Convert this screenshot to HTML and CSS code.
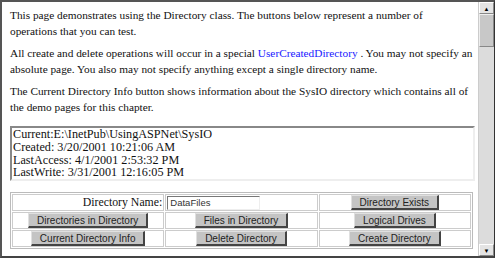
FILE: index.html
```html
<!DOCTYPE html>
<html lang="en">
<head>
    <meta charset="UTF-8">
    <title>Directory Class Demo</title>
    <link rel="stylesheet" href="styles.css">
</head>
<body>
    <div class="frame">
        <div class="content">
            <p>This page demonstrates using the Directory class. The buttons below represent a number of operations&nbsp;that you can test.</p>
            <p>All create and delete operations will occur in a special <a href="#">UserCreatedDirectory</a> . You may not specify an absolute page. You also may not specify anything except a single directory name.</p>
            <p>The Current Directory Info button shows information about the SysIO directory which contains all of the demo pages for this chapter.</p>

            <div class="info">
                Current:E:\InetPub\UsingASPNet\SysIO<br>
                Created: 3/20/2001 10:21:06 AM<br>
                LastAccess: 4/1/2001 2:53:32 PM<br>
                LastWrite: 3/31/2001 12:16:05 PM
            </div>

            <table class="actions">
                <tr>
                    <td class="label">Directory Name:</td>
                    <td class="left"><input type="text" value="DataFiles"></td>
                    <td><button>Directory Exists</button></td>
                </tr>
                <tr>
                    <td><button>Directories in Directory</button></td>
                    <td><button>Files in Directory</button></td>
                    <td><button>Logical Drives</button></td>
                </tr>
                <tr>
                    <td><button>Current Directory Info</button></td>
                    <td><button>Delete Directory</button></td>
                    <td><button>Create Directory</button></td>
                </tr>
            </table>
        </div>
        <div class="scrollbar">
            <div class="arrow up">&#9650;</div>
            <div class="thumb"></div>
            <div class="track"></div>
            <div class="arrow down">&#9660;</div>
        </div>
    </div>
</body>
</html>
```

FILE: styles.css
```css
* {
    box-sizing: border-box;
}

body {
    margin: 0;
    background: #fff;
    font-family: "Liberation Serif", "Times New Roman", serif;
    color: #111;
}

.frame {
    display: flex;
    width: 495px;
    height: 258px;
    border-top: 2px solid #555;
    border-left: 2px solid #555;
    border-right: 1px solid #333;
    border-bottom: 2px solid #444;
    overflow: hidden;
}

.content {
    flex: 1;
    padding: 6px 2px 0 8px;
    font-size: 11.3px;
    line-height: 15.5px;
    overflow: hidden;
}

.content p {
    margin: 0 2px 7px 0;
}

.content a {
    color: #1a1aff;
    text-decoration: none;
}

.info {
    margin: 11px 1px 0 0;
    height: 55px;
    border: 2px solid;
    border-color: #888 #eee #eee #888;
    padding: 0 1px;
    line-height: 12.8px;
    font-size: 12.2px;
    overflow: hidden;
}

.actions {
    width: 463px;
    margin-top: 11px;
    table-layout: fixed;
    border: 1px solid #bbb;
    border-spacing: 1px;
    font-family: "Liberation Sans", Arial, sans-serif;
}

.actions td {
    border: 1px solid #ccc;
    text-align: center;
    padding: 0;
    height: 17px;
    line-height: 13px;
}

.actions td.label {
    text-align: right;
    padding-right: 1px;
    font-family: "Liberation Serif", "Times New Roman", serif;
    font-size: 11.8px;
}

.actions td.left {
    text-align: left;
    padding-left: 1px;
}

.actions input {
    width: 93px;
    height: 14px;
    margin: 0;
    padding: 0 2px;
    border: 1px solid;
    border-color: #777 #eee #eee #777;
    font-family: "Liberation Sans", Arial, sans-serif;
    font-size: 9.5px;
    color: #333;
    vertical-align: middle;
}

.actions button {
    font-family: "Liberation Sans", Arial, sans-serif;
    font-size: 10px;
    color: #222;
    background: #c4c4c4;
    height: 15px;
    padding: 0 8px;
    border: 1px solid;
    border-color: #e0e0e0 #444 #444 #e0e0e0;
    border-width: 1px 2px 2px 1px;
    line-height: 11px;
    vertical-align: middle;
}

.scrollbar {
    width: 16px;
    display: flex;
    flex-direction: column;
    background: #ddd;
    border-left: 1px solid #ccc;
}

.arrow {
    height: 12px;
    font-size: 6px;
    line-height: 12px;
    text-align: center;
    color: #000;
    background: #e4e4e4;
    border: 1px solid;
    border-color: #fff #888 #888 #fff;
}

.thumb {
    height: 33px;
    background: #c8c8c8;
    border: 1px solid;
    border-color: #eee #888 #888 #eee;
}

.track {
    flex: 1;
    background: #dcdcdc;
}
```
